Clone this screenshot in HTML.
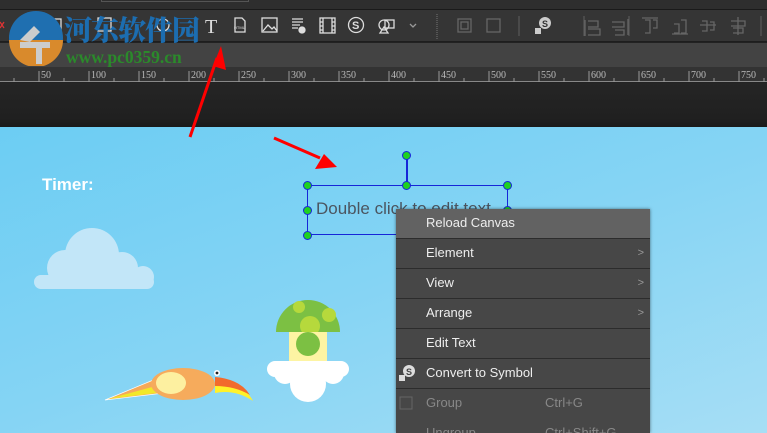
<!DOCTYPE html>
<html><head><meta charset="utf-8"><style>
*{margin:0;padding:0;box-sizing:border-box}
html,body{width:767px;height:433px;overflow:hidden}
body{position:relative;background:#222;font-family:"Liberation Sans",sans-serif}
.a{position:absolute}
.menu{left:396px;top:209px;width:254px;height:224px;overflow:hidden;background:#474747;box-shadow:0 0 3px rgba(0,0,0,.5);font-family:"Liberation Sans",sans-serif;font-size:13px;color:#eee}
.mi{height:30px;line-height:28px;padding-left:30px;border-bottom:1px solid #2c2c2c;position:relative}
.mi .ar{position:absolute;right:6px;top:0;color:#999;font-size:11px}
.mi .sc{position:absolute;left:149px;top:0}
.h{position:absolute;width:9px;height:9px;border-radius:50%;background:#1fd11f;border:1.5px solid #1626d8}
</style></head><body>
<div class="a" style="left:0;top:0;width:767px;height:10px;background:#2e2e2e;border-bottom:1px solid #1a1a1a"></div>
<div class="a" style="left:101px;top:-2px;width:148px;height:4px;border:1px solid #555"></div>
<div class="a" style="left:0;top:10px;width:767px;height:32px;background:#353535;border-bottom:1px solid #1e1e1e"></div>
<div class="a" style="left:0;top:43px;width:767px;height:24px;background:#434343"></div>
<div class="a" style="left:0;top:67px;width:767px;height:15px;background:#333;border-bottom:1px solid #888"></div>
<div class="a" style="left:0;top:83px;width:767px;height:44px;background:linear-gradient(#252525,#202020 80%,#1a1a1a)"></div>
<svg class="a" style="left:0;top:67px" width="767" height="16">
<g stroke="#999" stroke-width="1">
<path d="M14 11v4M64 11v4M114 11v4M164 11v4M214 11v4M264 11v4M314 11v4M364 11v4M414 11v4M464 11v4M514 11v4M564 11v4M614 11v4M664 11v4M714 11v4M764 11v4"/>
<path d="M39 4v11M89 4v11M139 4v11M189 4v11M239 4v11M289 4v11M339 4v11M389 4v11M439 4v11M489 4v11M539 4v11M589 4v11M639 4v11M689 4v11M739 4v11"/>
</g>
<g fill="#bbb" font-family="Liberation Serif,serif" font-size="10">
<text x="41" y="11">50</text><text x="91" y="11">100</text><text x="141" y="11">150</text><text x="191" y="11">200</text><text x="241" y="11">250</text><text x="291" y="11">300</text><text x="341" y="11">350</text><text x="391" y="11">400</text><text x="441" y="11">450</text><text x="491" y="11">500</text><text x="541" y="11">550</text><text x="591" y="11">600</text><text x="641" y="11">650</text><text x="691" y="11">700</text><text x="741" y="11">750</text>
</g></svg>
<svg class="a" style="left:0;top:10px" width="767" height="32" fill="none" stroke="#ddd" stroke-width="1.3">
<path d="M0 12l4 6M4 12l-4 6" stroke="#d33"/>
<rect x="50" y="9" width="11" height="12"/><rect x="98" y="8" width="13" height="13"/><circle cx="163" cy="15" r="6"/>
<text x="205" y="23" font-family="Liberation Serif,serif" font-size="20" fill="#ddd" stroke="none">T</text>
<path d="M235 8h7l3 3v11h-10z"/><text x="234" y="19" font-size="4" fill="#ddd" stroke="none">HTML</text>
<rect x="262" y="8" width="15" height="14"/><path d="M263 21l5-6 4 4 2-2 3 4"/>
<path d="M292 9h11M292 12h11M292 15h8M292 18h6"/><circle cx="302" cy="20" r="3" fill="#ddd"/>
<rect x="320" y="8" width="15" height="15"/><path d="M323 8v15M332 8v15M320 12h3M320 16h3M320 20h3M332 12h3M332 16h3M332 20h3"/>
<circle cx="356" cy="15" r="7.5"/><text x="352" y="19" font-size="11" font-weight="bold" fill="#ddd" stroke="none">S</text>
<circle cx="384" cy="15" r="5"/><rect x="385" y="10" width="9" height="8"/><path d="M380 23l4-6 4 6z"/>
<path d="M410 14l3 3 3-3" stroke="#999"/>
<path d="M437 4v25" stroke="#555" stroke-dasharray="1 1" stroke-width="2"/>
<g stroke="#666"><rect x="458" y="9" width="13" height="13"/><rect x="461" y="12" width="7" height="7"/><rect x="487" y="9" width="13" height="13"/><path d="M519 6v20M584 6v20M629 6v20M761 6v20" stroke="#555"/>
<path d="M585 10v16M588 11h10v6h-10M588 19h12v6h-12"/><path d="M628 9v16M612 12h12v5h-12M615 20h9v5h-9"/><path d="M642 8h16M645 10h5v13h-5M653 10h4v8h-4"/><path d="M672 24h16M674 14h5v9h-5M681 10h5v13h-5"/><path d="M700 15h16M702 11h5v10h-5M710 12h4v8h-4"/><path d="M738 7v18M731 11h14v5h-14M733 18h10v5h-10"/></g>
<circle cx="545" cy="13" r="6" fill="#ccc" stroke="none"/><text x="542" y="17" font-size="9" font-weight="bold" fill="#333" stroke="none">S</text><rect x="535" y="18" width="6" height="6" fill="#ccc" stroke="none"/>
</svg>
<svg class="a" style="left:6px;top:10px" width="60" height="56"><circle cx="30" cy="28" r="27" fill="#1f6fb0"/><path d="M3 30a27 27 0 0 0 54 0z" fill="#d98a2c"/><path d="M14 32h30v6h-8v16h-6v-16h-16z" fill="#ccc"/><path d="M14 30l14-14 6 6-10 10z" fill="#ccc"/></svg>
<div class="a" style="left:64px;top:12px;font-family:'Noto Serif CJK SC',serif;font-weight:900;font-size:28px;color:#1c6db0;letter-spacing:-1px;line-height:34px">河东软件园</div>
<div class="a" style="left:66px;top:48px;font-family:'Liberation Serif',serif;font-weight:bold;font-size:17.5px;color:#2b8a2b;line-height:18px">www.pc0359.cn</div>
<div class="a" style="left:0;top:127px;width:767px;height:306px;background:linear-gradient(160deg,#6ccdf3,#85d4f4 50%,#a6def5)"></div>
<div class="a" style="left:42px;top:175px;color:#fff;font-family:'Liberation Sans',sans-serif;font-weight:bold;font-size:17px">Timer:</div>
<svg class="a" style="left:30px;top:225px" width="130" height="65"><g fill="#c2e6f8"><circle cx="62" cy="30" r="27"/><circle cx="35" cy="43" r="18"/><circle cx="92" cy="43" r="16"/><circle cx="113" cy="52" r="11"/><circle cx="12" cy="57" r="7"/><rect x="4" y="50" width="120" height="14" rx="7"/></g></svg>
<svg class="a" style="left:265px;top:295px" width="90" height="110"><path d="M11 37a32 32 0 0 1 64 0z" fill="#7cc043"/><circle cx="34" cy="12" r="6" fill="#b6d93c"/><circle cx="64" cy="20" r="7" fill="#b6d93c"/><circle cx="45" cy="31" r="10" fill="#b6d93c"/><rect x="24" y="37" width="38" height="33" fill="#fdf4a3"/><circle cx="43" cy="49" r="12" fill="#7cc043"/><rect x="2" y="66" width="82" height="16" rx="8" fill="#fff"/><circle cx="43" cy="89" r="18" fill="#fff"/><circle cx="20" cy="78" r="11" fill="#fff"/><circle cx="68" cy="78" r="11" fill="#fff"/></svg>
<svg class="a" style="left:103px;top:362px" width="150" height="45"><path d="M2 38L60 14 70 30z" fill="#f5a95a" stroke="#fff" stroke-width=".7"/><path d="M5 37L60 22 62 30z" fill="#f1e82a"/><ellipse cx="80" cy="22" rx="32" ry="16" fill="#f6ab5c"/><ellipse cx="68" cy="21" rx="15" ry="11" fill="#fdf0a0"/><path d="M112 16q28 4 38 23q-18-12-38-8z" fill="#fff22a"/><path d="M112 15q25 2 35 18q-15-9-35-9z" fill="#f26b2c"/><circle cx="114" cy="11" r="3" fill="#fff"/><circle cx="114" cy="11" r="1.4" fill="#222"/></svg>
<div class="a" style="left:307px;top:185px;width:201px;height:50px;border:1.5px solid #1626d8"></div>
<div class="a" style="left:406px;top:155px;width:1.5px;height:30px;background:#1626d8"></div>
<div class="a" style="left:316px;top:199px;font-size:17px;color:#4b5560">Double click to edit text</div>
<div class="h" style="left:402px;top:151px"></div><div class="h" style="left:303px;top:181px"></div><div class="h" style="left:402px;top:181px"></div><div class="h" style="left:503px;top:181px"></div><div class="h" style="left:303px;top:206px"></div><div class="h" style="left:503px;top:206px"></div><div class="h" style="left:303px;top:231px"></div>
<svg class="a" style="left:0;top:0" width="767" height="433"><g fill="#f00" stroke="#f00" stroke-width="3"><path d="M190 137L217 58" /><path d="M274 138L320 158"/></g><path d="M221 46l5 24-13-4z" fill="#f00"/><path d="M337 167l-22 2 9-15z" fill="#f00"/></svg>
<div class="a menu">
<div class="mi" style="background:#626262">Reload Canvas</div>
<div class="mi">Element<span class="ar">&gt;</span></div>
<div class="mi">View<span class="ar">&gt;</span></div>
<div class="mi">Arrange<span class="ar">&gt;</span></div>
<div class="mi">Edit Text</div>
<div class="mi"><svg class="a" style="left:2px;top:5px" width="18" height="18"><circle cx="11" cy="7" r="6" fill="#ddd"/><text x="8" y="11" font-size="9" font-weight="bold" fill="#444">S</text><rect x="1" y="11" width="6" height="6" fill="#ddd"/></svg>Convert to Symbol</div>
<div class="mi" style="color:#888;border:none">Group<span class="sc">Ctrl+G</span><svg class="a" style="left:3px;top:7px" width="14" height="14"><rect x="1" y="1" width="12" height="12" fill="none" stroke="#666"/></svg></div>
<div class="mi" style="color:#888;border:none">Ungroup<span class="sc">Ctrl+Shift+G</span></div>
</div>
</body></html>
